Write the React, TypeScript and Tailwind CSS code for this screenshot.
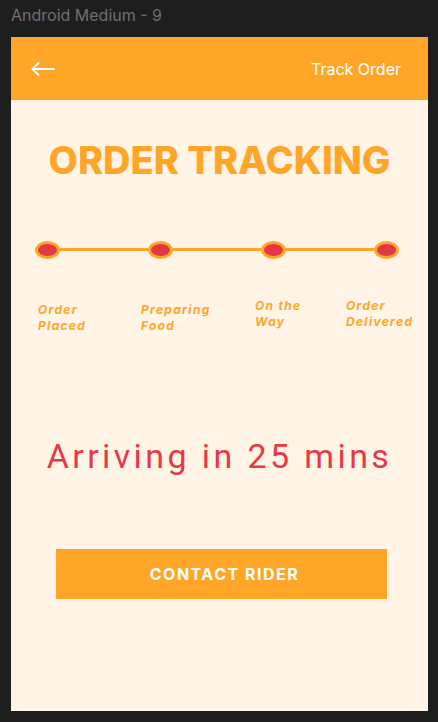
import React from "react";

function Dot() {
  return <div className="w-[25px] h-[18px] rounded-[50%] bg-[#E23744] border-[3px] border-[#FFA629] shrink-0" />;
}

function Line() {
  return <div className="flex-1 h-[3px] bg-[#FFA629] -mt-[2px]" />;
}

function Label({ a, b, w, lower }: { a: string; b: string; w: string; lower?: boolean }) {
  return (
    <div className={`${w} ${lower ? "mt-[4px]" : ""} text-[12px] leading-[16px] font-bold italic tracking-[1.3px] text-[#FFA629]`}>
      <div>{a}</div>
      <div>{b}</div>
    </div>
  );
}

export default function App() {
  return (
    <div className="w-[438px] h-[722px] bg-[#1e1e1e] overflow-hidden" style={{ fontFamily: "Inter, 'Noto Sans', sans-serif" }}>
      <div className="pt-[3px] pl-[11px] h-[27px] text-[16px] leading-[24px] text-[#6f6f6f]">Android Medium - 9</div>
      <div className="mt-[10px] ml-[11px] w-[417px] h-[674px] bg-[#FFF4E6] flex flex-col">
        <div className="h-[63px] bg-[#FFA629] flex items-center justify-between pl-[20px] pr-[27px]">
          <svg width="24" height="14" viewBox="0 0 24 14" fill="none" stroke="white" strokeWidth="2" strokeLinecap="round" strokeLinejoin="round">
            <path d="M23 7H1.5M7.5 1L1.5 7L7.5 13" />
          </svg>
          <span className="text-white text-[16px]">Track Order</span>
        </div>
        <div className="mt-[41px] text-center text-[38px] leading-none font-extrabold text-[#FFA629]">ORDER TRACKING</div>
        <div className="mt-[62px] ml-[24px] w-[364px] flex items-center">
          <Dot />
          <Line />
          <Dot />
          <Line />
          <Dot />
          <Line />
          <Dot />
        </div>
        <div className="mt-[39px] ml-[27px] flex items-start">
          <Label a="Order" b="Placed" w="w-[103px]" lower />
          <Label a="Preparing" b="Food" w="w-[114px]" lower />
          <Label a="On the" b="Way" w="w-[91px]" />
          <Label a="Order" b="Delivered" w="w-[80px]" />
        </div>
        <div className="mt-[105px] text-center text-[34px] leading-none tracking-[3.4px] text-[#E63946]" style={{ fontFamily: "Roboto, sans-serif" }}>
          Arriving in 25 mins
        </div>
        <div className="mt-[76px] ml-[45px] w-[331px] h-[50px] bg-[#FFA629] flex items-center justify-center">
          <span className="ml-[6px] text-white font-bold text-[16px] tracking-[1.5px]">CONTACT RIDER</span>
        </div>
      </div>
    </div>
  );
}
